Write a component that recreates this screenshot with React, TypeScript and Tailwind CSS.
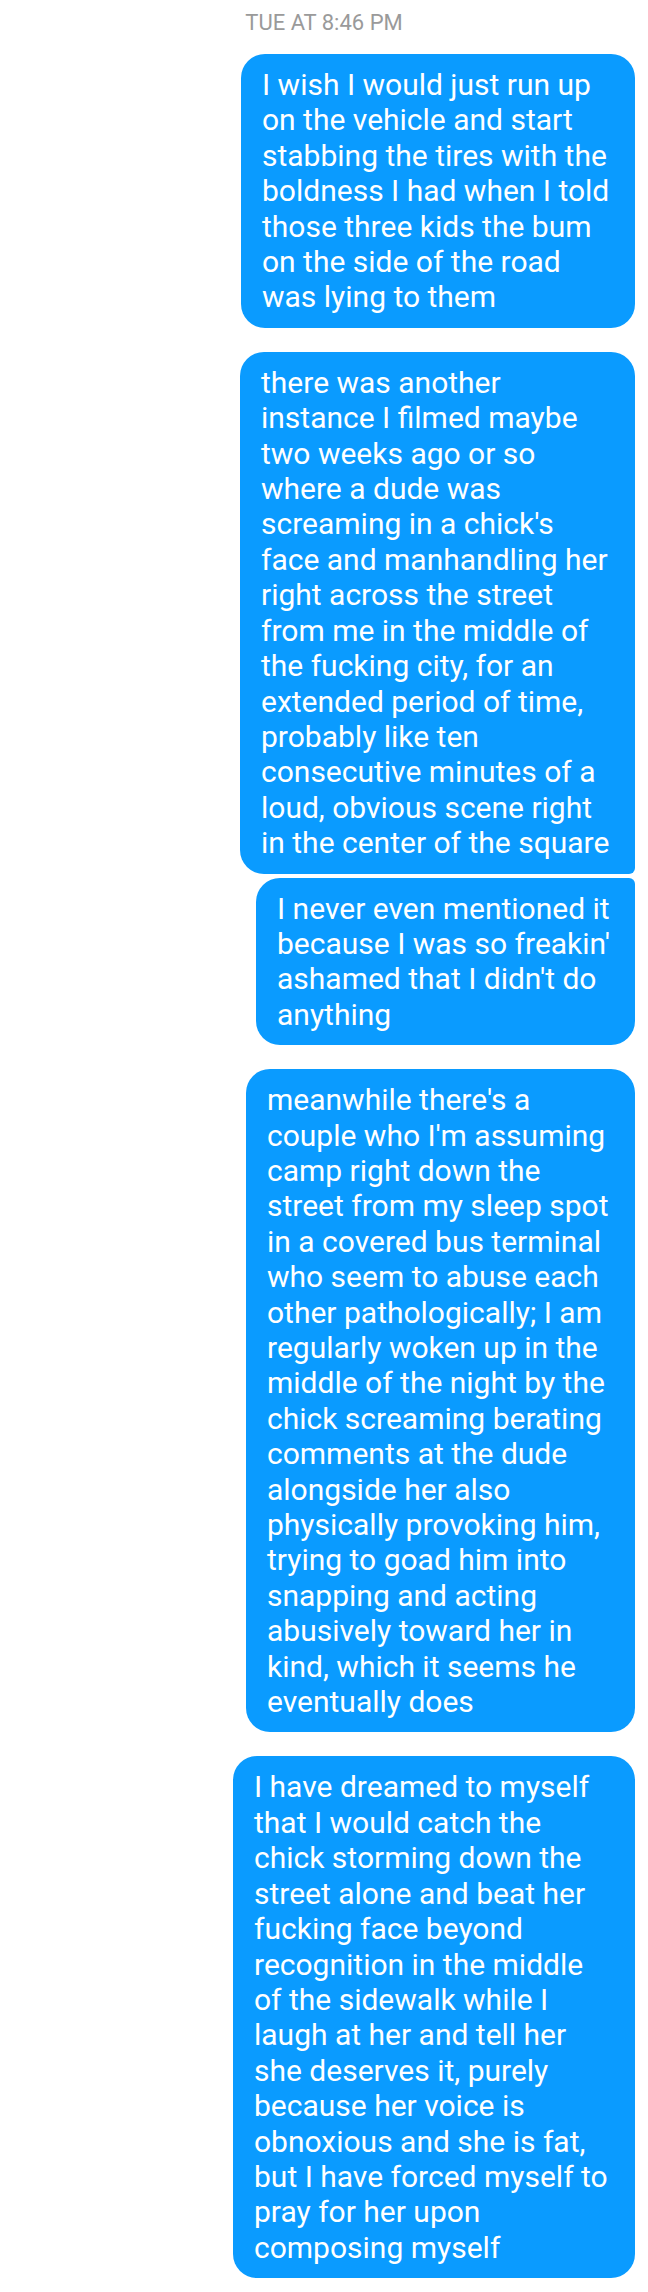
import React from "react";

interface Bubble {
  lines: string[];
  width: string;
  corners: string;
  gap: string;
}

const bubbles: Bubble[] = [
  {
    lines: [
      "I wish I would just run up",
      "on the vehicle and start",
      "stabbing the tires with the",
      "boldness I had when I told",
      "those three kids the bum",
      "on the side of the road",
      "was lying to them",
    ],
    width: "w-[394px]",
    corners: "rounded-[24px]",
    gap: "mt-[18px]",
  },
  {
    lines: [
      "there was another",
      "instance I filmed maybe",
      "two weeks ago or so",
      "where a dude was",
      "screaming in a chick's",
      "face and manhandling her",
      "right across the street",
      "from me in the middle of",
      "the fucking city, for an",
      "extended period of time,",
      "probably like ten",
      "consecutive minutes of a",
      "loud, obvious scene right",
      "in the center of the square",
    ],
    width: "w-[395px]",
    corners: "rounded-[24px] rounded-br-[6px]",
    gap: "mt-[24px]",
  },
  {
    lines: [
      "I never even mentioned it",
      "because I was so freakin'",
      "ashamed that I didn't do",
      "anything",
    ],
    width: "w-[379px]",
    corners: "rounded-[24px] rounded-tr-[6px]",
    gap: "mt-[4px]",
  },
  {
    lines: [
      "meanwhile there's a",
      "couple who I'm assuming",
      "camp right down the",
      "street from my sleep spot",
      "in a covered bus terminal",
      "who seem to abuse each",
      "other pathologically; I am",
      "regularly woken up in the",
      "middle of the night by the",
      "chick screaming berating",
      "comments at the dude",
      "alongside her also",
      "physically provoking him,",
      "trying to goad him into",
      "snapping and acting",
      "abusively toward her in",
      "kind, which it seems he",
      "eventually does",
    ],
    width: "w-[389px]",
    corners: "rounded-[24px]",
    gap: "mt-[24px]",
  },
  {
    lines: [
      "I have dreamed to myself",
      "that I would catch the",
      "chick storming down the",
      "street alone and beat her",
      "fucking face beyond",
      "recognition in the middle",
      "of the sidewalk while I",
      "laugh at her and tell her",
      "she deserves it, purely",
      "because her voice is",
      "obnoxious and she is fat,",
      "but I have forced myself to",
      "pray for her upon",
      "composing myself",
    ],
    width: "w-[402px]",
    corners: "rounded-[24px]",
    gap: "mt-[24px]",
  },
];

export default function App() {
  return (
    <div className="w-[648px] min-h-[2292px] bg-white pt-[10px] flex flex-col font-['Roboto',sans-serif]">
      <p className="text-center text-[22px] leading-[26px] text-[#9a9a9a]">TUE AT 8:46 PM</p>
      {bubbles.map((b, i) => (
        <div
          key={i}
          className={`${b.width} ${b.corners} ${b.gap} self-end mr-[13px] bg-[#0a9bff] pl-[21px] py-[13px] text-white text-[30px] leading-[35.4px] whitespace-nowrap`}
        >
          {b.lines.map((line, j) => (
            <div key={j}>{line}</div>
          ))}
        </div>
      ))}
    </div>
  );
}
